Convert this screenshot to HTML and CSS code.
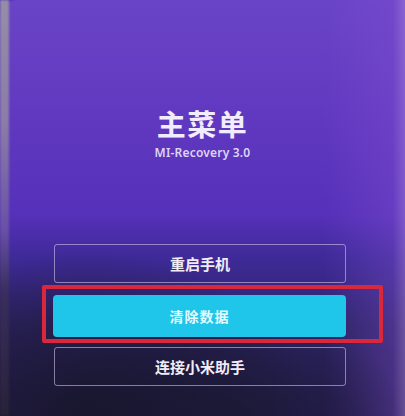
FILE: index.html
```html
<!DOCTYPE html>
<html lang="zh-CN">
<head>
<meta charset="utf-8">
<title>MI-Recovery 3.0</title>
<link rel="stylesheet" href="styles.css">
</head>
<body>
<div class="device">
  <div class="bezel"></div>
  <main class="screen">
    <h1 class="title">主菜单</h1>
    <p class="subtitle">MI-Recovery 3.0</p>
    <nav class="menu">
      <button class="item">重启手机</button>
      <div class="highlight">
        <button class="item primary">清除数据</button>
      </div>
      <button class="item">连接小米助手</button>
    </nav>
  </main>
</div>
</body>
</html>
```

FILE: styles.css
```css
html, body {
  margin: 0;
  padding: 0;
  background: #1c1838;
}

.device {
  width: 405px;
  height: 416px;
  display: flex;
  overflow: hidden;
  position: relative;
  background: #5a34bb;
}

.bezel {
  width: 9px;
  flex: none;
  background: linear-gradient(180deg, #958ea8 0%, #8a7ca8 30%, #6a50a8 55%, #3a2e5e 70%, #282238 100%);
  filter: blur(1px);
}

.screen {
  flex: 1;
  display: flex;
  flex-direction: column;
  align-items: center;
  padding-top: 105px;
  margin-left: -9px;
  border-top-left-radius: 18px;
  background:
    radial-gradient(ellipse 55% 40% at 22% 100%, rgba(24, 22, 44, 0.95), rgba(24, 22, 44, 0) 100%),
    radial-gradient(ellipse 45% 30% at 55% 102%, rgba(28, 26, 56, 0.9), rgba(28, 26, 56, 0) 100%),
    linear-gradient(90deg, rgba(0,0,0,0) 80%, rgba(130, 80, 210, 0.35) 97%, rgba(170, 130, 220, 0.5) 100%),
    linear-gradient(180deg, #6a44c6 0%, #6038c0 30%, #5530b8 52%, #3e2a98 62%, #2e2466 78%, #241c4c 100%);
  font-family: "Noto Sans CJK SC", "Noto Sans", sans-serif;
}

.title {
  margin: 0;
  font-size: 29px;
  line-height: 36px;
  font-weight: 700;
  letter-spacing: 1.5px;
  color: #f2ecff;
}

.subtitle {
  margin: 4px 0 0;
  font-family: "Noto Sans", "Noto Sans CJK SC", sans-serif;
  font-size: 12px;
  line-height: 16px;
  font-weight: 600;
  letter-spacing: 0.2px;
  color: #ddd4f4;
}

.menu {
  margin-top: 83px;
  margin-right: 5px;
  width: 292px;
  display: flex;
  flex-direction: column;
  gap: 11px;
}

.item {
  height: 39px;
  width: 100%;
  border: 1px solid rgba(220, 210, 240, 0.55);
  border-radius: 3px;
  background: transparent;
  color: #f1ebf6;
  font-family: "Noto Sans CJK SC", sans-serif;
  font-size: 15px;
  font-weight: 700;
  padding: 0;
}

.highlight {
  position: relative;
  margin: 1px 0 -1px -1px;
}

.highlight::after {
  content: "";
  position: absolute;
  top: -10px;
  left: -11px;
  right: -37px;
  bottom: -6px;
  border: 4px solid #d9283c;
  border-radius: 2px;
  pointer-events: none;
}

.primary {
  display: block;
  height: 42px;
  border: none;
  border-radius: 4px;
  background: #20c6ea;
  color: #e6fbff;
  font-size: 14px;
  letter-spacing: 1px;
}
```
